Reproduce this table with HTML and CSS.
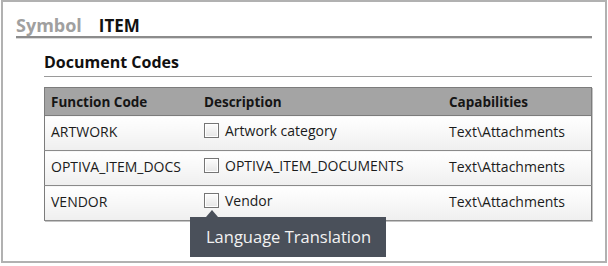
FILE: index.html
```html
<!DOCTYPE html>
<html>
<head>
<meta charset="utf-8">
<link rel="stylesheet" href="styles.css">
</head>
<body>
<div class="frame">
  <div class="title">
    <span class="label">Symbol</span>
    <span class="value">ITEM</span>
  </div>
  <div class="section">
    <h2 class="section-title">Document Codes</h2>
    <table class="grid">
      <thead>
        <tr>
          <th class="c1">Function Code</th>
          <th class="c2">Description</th>
          <th class="c3">Capabilities</th>
        </tr>
      </thead>
      <tbody>
        <tr>
          <td>ARTWORK</td>
          <td><span class="desc"><span class="check"></span>Artwork category</span></td>
          <td>Text\Attachments</td>
        </tr>
        <tr>
          <td>OPTIVA_ITEM_DOCS</td>
          <td><span class="desc"><span class="check"></span>OPTIVA_ITEM_DOCUMENTS</span></td>
          <td>Text\Attachments</td>
        </tr>
        <tr>
          <td>VENDOR</td>
          <td>
            <span class="desc"><span class="check has-tip"><span class="tooltip">Language Translation</span></span>Vendor</span>
          </td>
          <td>Text\Attachments</td>
        </tr>
      </tbody>
    </table>
  </div>
</div>
</body>
</html>
```

FILE: styles.css
```css
html, body {
  margin: 0;
  padding: 0;
  background: #ffffff;
}

body {
  font-family: "Open Sans", "Noto Sans", sans-serif;
  color: #1b1b1b;
}

.frame {
  box-sizing: border-box;
  width: 606px;
  height: 263px;
  margin-left: 1px;
  border: 2px solid #b1b1b1;
  padding: 12px 13px 0 13px;
}

.title {
  display: flex;
  align-items: baseline;
  gap: 17px;
  height: 22px;
  border-bottom: 2px solid #8c8c8c;
  box-shadow: 0 1px 0 #d8d8d8;
  font-size: 18px;
  font-weight: 600;
  line-height: 22px;
}

.title .label {
  color: #a0a0a0;
  font-weight: 700;
}

.title .value {
  color: #111111;
  font-weight: 700;
  font-size: 17px;
}

.section {
  padding-left: 28px;
  padding-top: 12px;
}

.section-title {
  margin: 0;
  font-size: 16px;
  font-weight: 700;
  line-height: 24px;
  height: 26px;
  border-bottom: 1px solid #9a9a9a;
  color: #111111;
}

.grid {
  margin-top: 10px;
  width: 100%;
  border-collapse: collapse;
  border: 1px solid #7c7c7c;
  box-shadow: 1px 1px 0 #c4c4c4;
  font-size: 14px;
}

.grid th {
  background: #a4a4a4;
  text-align: left;
  font-weight: 700;
  font-size: 13.5px;
  height: 27px;
  padding: 0 6px;
  color: #151515;
  border-bottom: 1px solid #7c7c7c;
}

.grid th.c1 { width: 141px; }
.grid th.c2 { width: 233px; }

.grid td {
  height: 31px;
  padding: 0 6px 3px 6px;
  border-bottom: 1px solid #8a8a8a;
  background: linear-gradient(#ffffff, #efefef);
  white-space: nowrap;
}

.desc {
  display: inline-flex;
  align-items: center;
  gap: 6px;
}

.check {
  position: relative;
  display: inline-block;
  box-sizing: border-box;
  width: 15px;
  height: 15px;
  border: 1px solid #757575;
  background: linear-gradient(#fdfdfd, #e6e6e6);
  box-shadow: inset 0 0 0 1px #ffffff;
}

.tooltip {
  position: absolute;
  left: -15px;
  top: 23px;
  width: 196px;
  height: 40px;
  box-sizing: border-box;
  padding-left: 16px;
  background: #4a505a;
  color: #f2f2f2;
  font-size: 16.5px;
  line-height: 40px;
  white-space: nowrap;
}

.tooltip::before {
  content: "";
  position: absolute;
  left: 16px;
  top: -7px;
  border-left: 6px solid transparent;
  border-right: 6px solid transparent;
  border-bottom: 7px solid #4a505a;
}
```
